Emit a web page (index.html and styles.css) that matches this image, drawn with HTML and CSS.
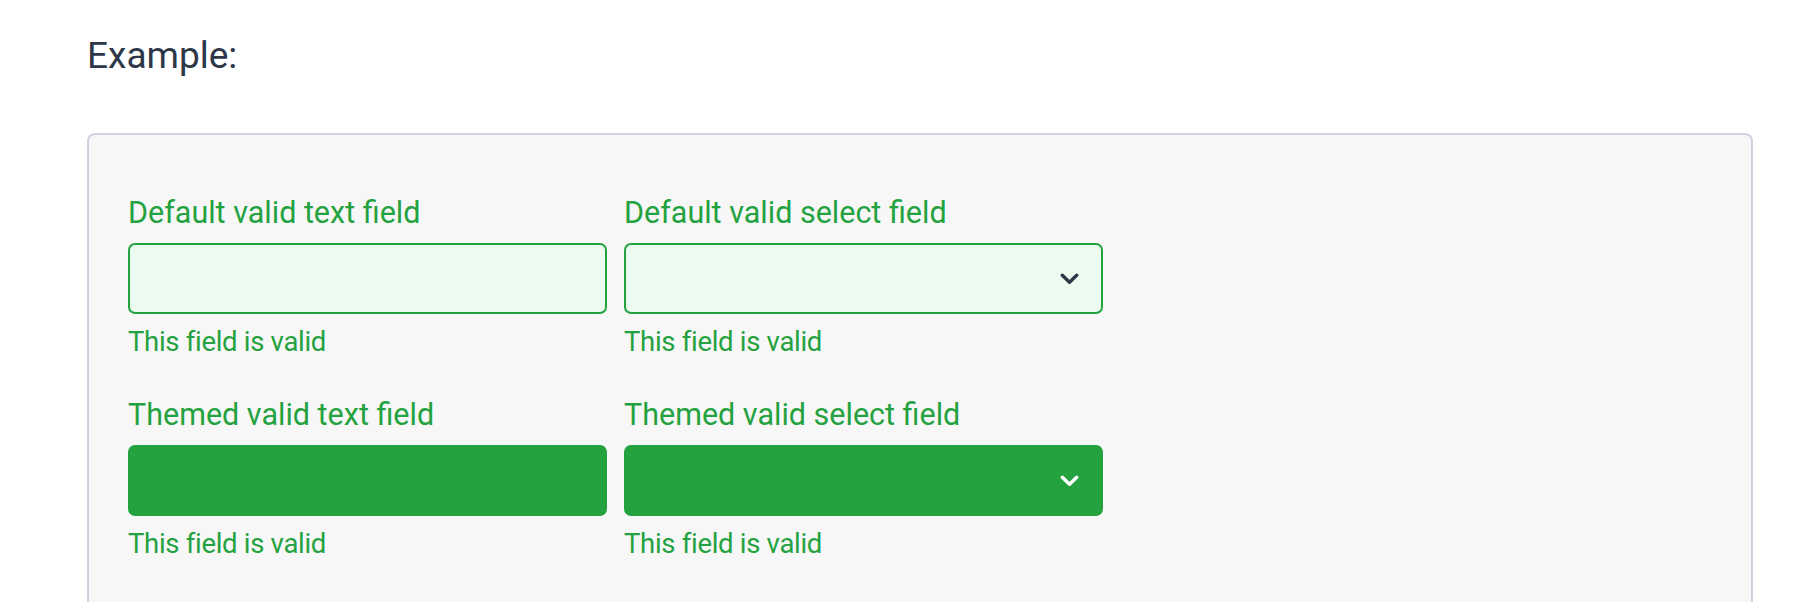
FILE: index.html
```html
<!DOCTYPE html>
<html lang="en">
<head>
<meta charset="utf-8">
<title>Example</title>
<link rel="stylesheet" href="styles.css">
</head>
<body>
<main class="page">
  <h2 class="heading">Example:</h2>
  <section class="example">
    <div class="form-grid">
      <div class="field">
        <label class="field-label" for="f1">Default valid text field</label>
        <input id="f1" class="control control-default" type="text">
        <p class="help">This field is valid</p>
      </div>
      <div class="field">
        <label class="field-label" for="f2">Default valid select field</label>
        <div class="select-wrap">
          <select id="f2" class="control control-default"><option></option></select>
          <svg class="chevron chevron-dark" width="19" height="12" viewBox="0 0 19 12" aria-hidden="true"><path d="M2.3 2.3 L9.5 9.3 L16.7 2.3" fill="none" stroke="currentColor" stroke-width="3.4" stroke-linecap="round" stroke-linejoin="round"/></svg>
        </div>
        <p class="help">This field is valid</p>
      </div>
      <div class="field">
        <label class="field-label" for="f3">Themed valid text field</label>
        <input id="f3" class="control control-themed" type="text">
        <p class="help">This field is valid</p>
      </div>
      <div class="field">
        <label class="field-label" for="f4">Themed valid select field</label>
        <div class="select-wrap">
          <select id="f4" class="control control-themed"><option></option></select>
          <svg class="chevron chevron-light" width="19" height="12" viewBox="0 0 19 12" aria-hidden="true"><path d="M2.3 2.3 L9.5 9.3 L16.7 2.3" fill="none" stroke="currentColor" stroke-width="3.4" stroke-linecap="round" stroke-linejoin="round"/></svg>
        </div>
        <p class="help">This field is valid</p>
      </div>
    </div>
  </section>
</main>
</body>
</html>
```
FILE: styles.css
```css
html, body {
  margin: 0;
  padding: 0;
  background: #ffffff;
  overflow: hidden;
}

body {
  font-family: Roboto, "Liberation Sans", sans-serif;
  color: #2d3748;
}

.page {
  padding: 34px 67px 0 87px;
}

.heading {
  margin: 0 0 55px 0;
  font-size: 37px;
  line-height: 44px;
  font-weight: 400;
  color: #2d3748;
}

.example {
  box-sizing: border-box;
  width: 1666px;
  height: 520px;
  background: #f7f7f7;
  border: 2px solid #cdd4e0;
  border-radius: 8px;
  padding: 60px 39px 0 39px;
}

.form-grid {
  display: grid;
  grid-template-columns: 479px 479px;
  column-gap: 17px;
  row-gap: 39px;
}

.field {
  display: flex;
  flex-direction: column;
}

.field-label {
  font-size: 30.5px;
  line-height: 36px;
  color: #24a240;
  margin-bottom: 12px;
}

.control {
  box-sizing: border-box;
  display: block;
  width: 100%;
  height: 71px;
  margin: 0;
  padding: 0 16px;
  border-radius: 7px;
  font: inherit;
  font-size: 24px;
  outline: none;
  -webkit-appearance: none;
  appearance: none;
}

.control-default {
  background: #ebfbf0;
  border: 2px solid #24a240;
}

.control-themed {
  background: #24a240;
  border: 2px solid #24a240;
  color: #ffffff;
}

.select-wrap {
  position: relative;
}

.chevron {
  position: absolute;
  right: 24px;
  top: 30px;
  pointer-events: none;
}

.chevron-dark {
  color: #2d3748;
}

.chevron-light {
  color: #ffffff;
}

.help {
  margin: 12px 0 0 0;
  font-size: 27.5px;
  line-height: 32px;
  letter-spacing: -0.3px;
  color: #24a240;
}
```
